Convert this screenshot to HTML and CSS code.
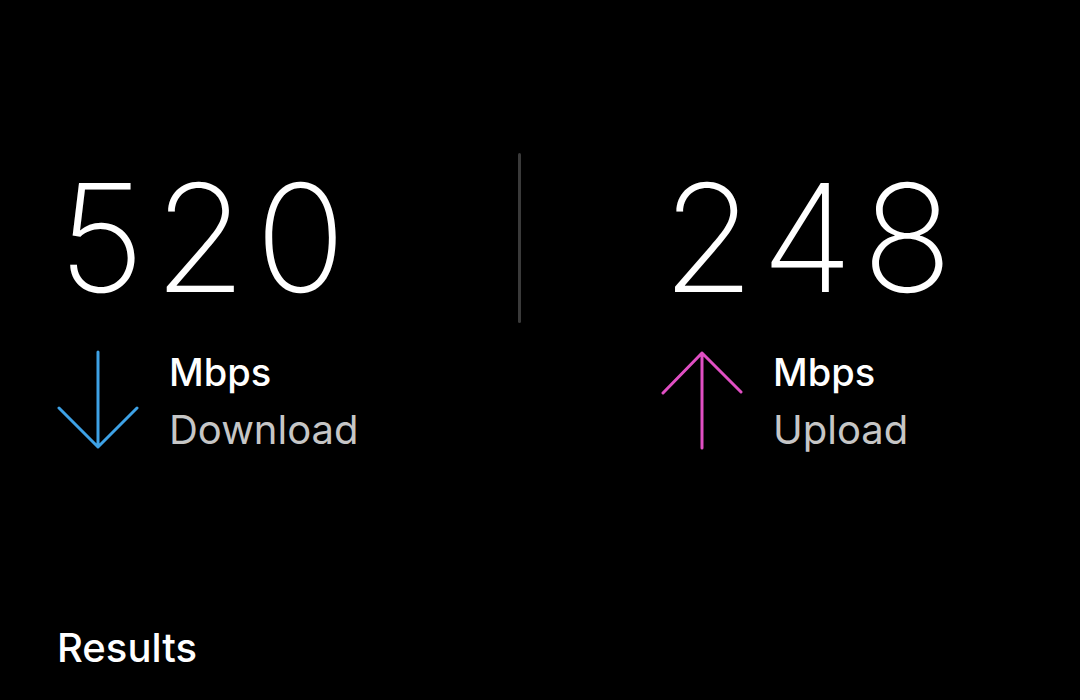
FILE: index.html
```html
<!DOCTYPE html>
<html lang="en">
<head>
    <meta charset="UTF-8">
    <meta name="viewport" content="width=device-width, initial-scale=1.0">
    <title>Speed test</title>
    <link rel="stylesheet" href="styles.css">
</head>
<body>
    <div class="screen">
        <div class="speeds">
            <div class="metric">
                <div class="value">520</div>
                <div class="unit-row">
                    <svg class="arrow" width="82" height="100" viewBox="0 0 82 100">
                        <path d="M41 2 V97 M2 58 L41 97 L80 58" fill="none" stroke="#3ea2e6" stroke-width="3" stroke-linecap="round" stroke-linejoin="round"/>
                    </svg>
                    <div class="labels">
                        <div class="unit">Mbps</div>
                        <div class="kind">Download</div>
                    </div>
                </div>
            </div>
            <div class="divider"></div>
            <div class="metric">
                <div class="value">248</div>
                <div class="unit-row">
                    <svg class="arrow" width="82" height="100" viewBox="0 0 82 100">
                        <path d="M41 98 V3 M2 43 L41 3 L80 42" fill="none" stroke="#e04fc3" stroke-width="3" stroke-linecap="round" stroke-linejoin="round"/>
                    </svg>
                    <div class="labels">
                        <div class="unit">Mbps</div>
                        <div class="kind">Upload</div>
                    </div>
                </div>
            </div>
        </div>
        <div class="results">Results</div>
    </div>
</body>
</html>
```

FILE: styles.css
```css
html, body {
    margin: 0;
    padding: 0;
    background: #000;
    width: 100%;
    height: 100%;
}
.screen {
    font-family: Inter, "Noto Sans", sans-serif;
    color: #fff;
    padding: 153px 0 0 57px;
    height: 700px;
    box-sizing: border-box;
}
.speeds {
    display: flex;
    align-items: flex-start;
}
.metric {
    width: 461px;
    padding-top: 12px;
}
.metric:last-child {
    width: auto;
}
.value {
    font-size: 150px;
    font-weight: 200;
    line-height: 1;
    letter-spacing: 9px;
    margin-left: 1px;
    margin-top: -2px;
}
.unit-row {
    display: flex;
    align-items: flex-start;
    gap: 30px;
    margin-top: 36px;
}
.arrow {
    display: block;
    margin-top: 1px;
}
.unit {
    font-size: 38px;
    font-weight: 500;
    line-height: 46px;
}
.kind {
    font-size: 40px;
    font-weight: 400;
    line-height: 48px;
    color: #c6c6c6;
    margin-top: 11px;
}
.divider {
    width: 3px;
    height: 170px;
    background: #3a3a3a;
    border-radius: 2px;
    margin-right: 140px;
}
.results {
    font-size: 40px;
    font-weight: 500;
    line-height: 44px;
    margin-top: 172px;
}
```
